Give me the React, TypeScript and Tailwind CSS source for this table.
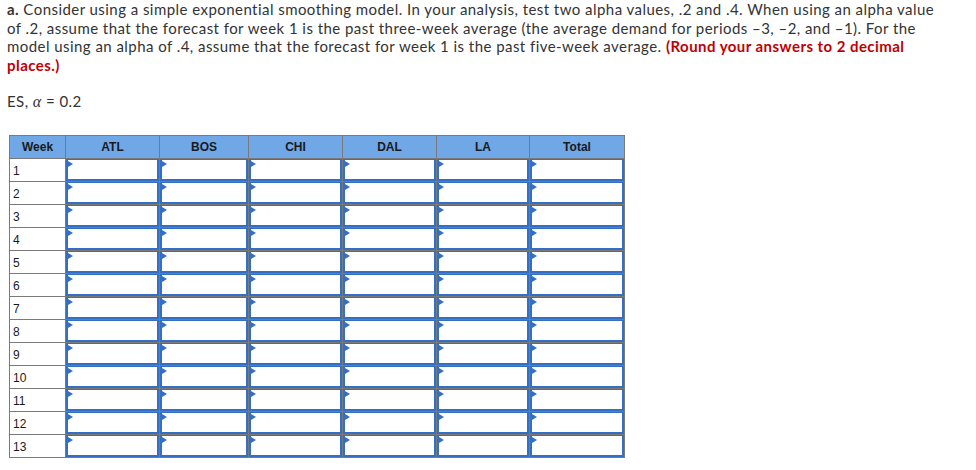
import React from 'react';

const cols = [
    { name: 'ATL', w: 'w-[94px]' },
    { name: 'BOS', w: 'w-[89px]' },
    { name: 'CHI', w: 'w-[94px]' },
    { name: 'DAL', w: 'w-[94px]' },
    { name: 'LA', w: 'w-[93px]' },
    { name: 'Total', w: 'w-[95px]' },
];

const weeks = Array.from({ length: 13 }, (_, i) => i + 1);

const InputCell: React.FC = () => (
    <td className="border border-[#7a7a7a] p-0 h-[23px]">
        <div className="relative h-[22px] border-2 border-t border-[#3370c4] bg-white">
            <span className="absolute left-0 top-[1px] w-0 h-0 border-y-[3px] border-y-transparent border-l-[5px] border-l-[#3370c4]" />
        </div>
    </td>
);

const App: React.FC = () => {
    return (
        <div className="bg-white w-[976px] h-[470px] overflow-hidden text-[#333] font-['Lato','Open_Sans',sans-serif]">
            <p className="pl-[7px] pt-0 text-[15px] leading-[18.5px] tracking-[0.45px] whitespace-nowrap">
                <b>a.</b> Consider using a simple exponential smoothing model. In your analysis, test two alpha values, .2 and .4. When using an alpha value
                <br />
                of .2, assume that the forecast for week 1 is the past three-week average (the average demand for periods –3, –2, and –1). For the
                <br />
                model using an alpha of .4, assume that the forecast for week 1 is the past five-week average.{' '}
                <b className="text-[#c00000]">(Round your answers to 2 decimal</b>
                <br />
                <b className="text-[#c00000]">places.)</b>
            </p>
            <p className="pl-[7px] mt-[18px] text-[15px] leading-[18.5px] tracking-[0.45px]">
                ES, <i className="font-['Liberation_Serif',serif] text-[16px]">α</i> = 0.2
            </p>
            <table className="ml-[9px] mt-[23px] border-collapse table-fixed font-['Liberation_Sans',Arial,sans-serif] text-[12px] text-[#1a1a1a]">
                <colgroup>
                    <col className="w-[56px]" />
                    {cols.map((c) => (
                        <col key={c.name} className={c.w} />
                    ))}
                </colgroup>
                <thead>
                    <tr className="h-[23px] bg-[#6fa7e7]">
                        <th className="border border-[#7a7a7a] font-bold text-center">Week</th>
                        {cols.map((c) => (
                            <th key={c.name} className="border border-[#7a7a7a] font-bold text-center">
                                {c.name}
                            </th>
                        ))}
                    </tr>
                </thead>
                <tbody>
                    {weeks.map((w) => (
                        <tr key={w}>
                            <td className="border border-[#7a7a7a] pl-[3px] pt-[3px] align-middle h-[23px]">{w}</td>
                            {cols.map((c) => (
                                <InputCell key={c.name} />
                            ))}
                        </tr>
                    ))}
                </tbody>
            </table>
        </div>
    );
};

export default App;
